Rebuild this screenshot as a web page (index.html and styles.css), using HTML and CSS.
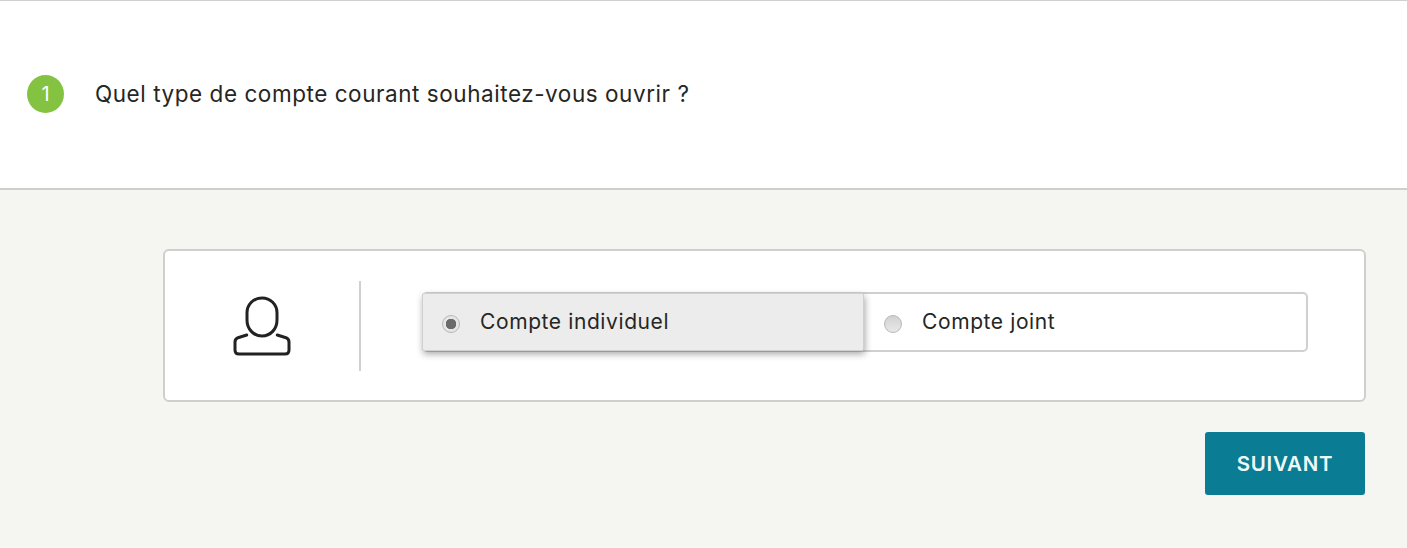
FILE: index.html
```html
<!DOCTYPE html>
<html lang="fr">
<head>
<meta charset="utf-8">
<title>Type de compte</title>
<link rel="stylesheet" href="styles.css">
</head>
<body>
<header class="question">
  <span class="step">1</span>
  <h1 class="title">Quel type de compte courant souhaitez-vous ouvrir ?</h1>
</header>
<main class="content">
  <section class="card">
    <div class="icon-cell">
      <svg class="user-icon" width="60" height="62" viewBox="0 0 60 62" fill="none" stroke="#222" stroke-width="3" stroke-linecap="round" stroke-linejoin="round">
        <path d="M30 3C21.500 3 15 9.500 15 18V25C15 34 21.500 41 30 41C38.500 41 45 34 45 25V18C45 9.500 38.500 3 30 3Z"/>
        <path d="M14.700 40L6 42.700C4 43.500 3 45 3 47V55C3 57.500 4.500 59 7 59H53C55.500 59 57 57.500 57 55V47C57 45 56 43.500 54 42.700L45.300 40"/>
      </svg>
    </div>
    <div class="choice-cell">
      <div class="segments">
        <label class="segment selected"><span class="radio checked"></span><span class="label">Compte individuel</span></label>
        <label class="segment"><span class="radio"></span><span class="label">Compte joint</span></label>
      </div>
    </div>
  </section>
  <div class="actions"><button class="next" type="button">SUIVANT</button></div>
</main>
</body>
</html>
```
FILE: styles.css
```css
* { box-sizing: border-box; }
html, body { margin: 0; height: 100%; }
body {
  background: #f5f5f1;
  color: #262622;
  font-family: Inter, "Liberation Sans", sans-serif;
  overflow: hidden;
}
.question {
  height: 190px;
  display: flex;
  align-items: center;
  gap: 31px;
  padding: 0 0 2px 27px;
  background: #fff;
  border-top: 1px solid #d0d0d0;
  border-bottom: 2px solid #cfcfcd;
}
.step {
  width: 37px;
  height: 38px;
  border-radius: 50%;
  background: #83c341;
  color: #fff;
  font-size: 20px;
  display: flex;
  align-items: center;
  justify-content: center;
}
.title {
  margin: 0;
  font-size: 22.5px;
  font-weight: 400;
  letter-spacing: .55px;
}
.content {
  padding: 59px 41px 0 163px;
}
.card {
  height: 153px;
  display: flex;
  align-items: center;
  background: #fff;
  border: 2px solid #cfcfcd;
  border-radius: 6px;
}
.icon-cell {
  width: 196px;
  height: 90px;
  border-right: 2px solid #d0d0ce;
  display: flex;
  align-items: center;
  justify-content: center;
}
.user-icon { margin-top: 1px; }
.choice-cell {
  flex: 1;
  padding: 0 56px 7px 61px;
}
.segments {
  display: flex;
  height: 60px;
  border: 2px solid #d0d0ce;
  border-radius: 5px;
}
.segment {
  flex: 1;
  display: flex;
  align-items: center;
  gap: 20px;
  padding-left: 20px;
  font-size: 21px;
  letter-spacing: .6px;
}
.label { margin-top: -2px; }
.segment.selected {
  flex: none;
  width: 442px;
  margin: -1px 0 -1px -2px;
  padding-left: 19px;
  background: #ececec;
  border: 1px solid #d0d0ce;
  box-shadow: 1px 3px 7px rgba(0, 0, 0, .35);
  border-radius: 2px;
}
.radio {
  width: 18px;
  height: 18px;
  flex: none;
  margin-top: 4px;
  border-radius: 50%;
  border: 1px solid #b8b8b8;
  background: linear-gradient(#d2d2d2, #e8e8e8);
}
.radio.checked {
  background: radial-gradient(circle, #6b6b6b 0 5px, #e6e6e6 5.500px);
}
.actions {
  display: flex;
  justify-content: flex-end;
  margin-top: 30px;
  padding-right: 1px;
}
.next {
  width: 160px;
  height: 63px;
  border: 0;
  border-radius: 3px;
  background: #0a7c94;
  color: #eefafa;
  font-family: inherit;
  font-size: 20.5px;
  font-weight: 600;
  letter-spacing: .7px;
}
```
